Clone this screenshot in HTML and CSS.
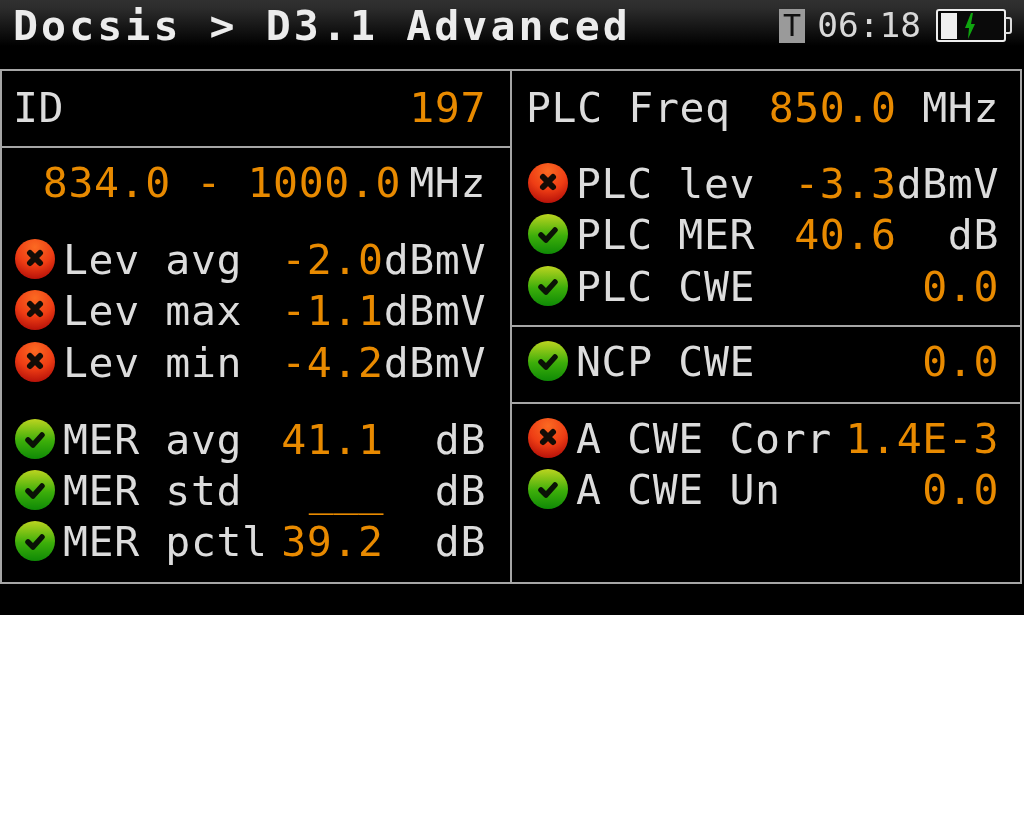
FILE: index.html
```html
<!DOCTYPE html>
<html lang="en">
<head>
<meta charset="utf-8">
<title>Docsis D3.1 Advanced</title>
<link rel="stylesheet" href="styles.css">
</head>
<body>
<svg class="defs" width="0" height="0" aria-hidden="true">
  <defs>
    <radialGradient id="redFill" cx="50%" cy="20%" r="85%">
      <stop offset="0" stop-color="#fb6a22"/>
      <stop offset="0.55" stop-color="#ee3d14"/>
      <stop offset="1" stop-color="#b00c08"/>
    </radialGradient>
    <linearGradient id="greenFill" x1="0" y1="0" x2="0" y2="1">
      <stop offset="0" stop-color="#bcd420"/>
      <stop offset="0.55" stop-color="#3cae0a"/>
      <stop offset="1" stop-color="#0f8a06"/>
    </linearGradient>
    <symbol id="bad" viewBox="0 0 40 40">
      <circle cx="20" cy="20" r="20" fill="url(#redFill)"/>
      <path d="M15 14 L25 24 M25 14 L15 24" stroke="#120c06" stroke-width="6" stroke-linecap="round" fill="none"/>
    </symbol>
    <symbol id="good" viewBox="0 0 40 40">
      <circle cx="20" cy="20" r="20" fill="url(#greenFill)"/>
      <path d="M13 21 L18 26 L27 16" stroke="#0a1206" stroke-width="5.500" stroke-linecap="round" stroke-linejoin="round" fill="none"/>
    </symbol>
  </defs>
</svg>
<main class="screen">
  <header class="topbar">
    <h1 class="title">Docsis &gt; D3.1 Advanced</h1>
    <div class="status">
      <span class="badge">T</span>
      <span class="clock">06:18</span>
      <svg class="battery" viewBox="0 0 76 34" width="76" height="34" aria-hidden="true">
        <rect x="1" y="1" width="68" height="31" rx="2" fill="#0a0a0a" stroke="#eee" stroke-width="2"/>
        <path d="M69 9 h4 a2 2 0 0 1 2 2 v11 a2 2 0 0 1 -2 2 h-4" fill="none" stroke="#ddd" stroke-width="2"/>
        <rect x="5" y="4" width="16" height="26" fill="#f0f0f0"/>
        <path d="M35 4 L29 19 L33 19 L32 30 L39 15 L35 15 L37 4 Z" fill="#0fa50f"/>
      </svg>
    </div>
  </header>
  <div class="panel">
    <section class="col col-left">
      <div class="cell cell-id">
        <div class="row"><span class="label">ID</span><span class="val">197</span></div>
      </div>
      <div class="cell cell-grow">
        <div class="row row-range"><span class="val">834.0 - 1000.0</span><span class="unit-mhz">MHz</span></div>
        <div class="group group-lev">
          <div class="row"><svg class="ico"><use href="#bad"/></svg><span class="label">Lev avg</span><span class="val">-2.0</span><span class="unit">dBmV</span></div>
          <div class="row"><svg class="ico"><use href="#bad"/></svg><span class="label">Lev max</span><span class="val">-1.1</span><span class="unit">dBmV</span></div>
          <div class="row"><svg class="ico"><use href="#bad"/></svg><span class="label">Lev min</span><span class="val">-4.2</span><span class="unit">dBmV</span></div>
        </div>
        <div class="group group-mer">
          <div class="row"><svg class="ico"><use href="#good"/></svg><span class="label">MER avg</span><span class="val">41.1</span><span class="unit">dB</span></div>
          <div class="row"><svg class="ico"><use href="#good"/></svg><span class="label">MER std</span><span class="val val-blank">___</span><span class="unit">dB</span></div>
          <div class="row"><svg class="ico"><use href="#good"/></svg><span class="label">MER pctl</span><span class="val">39.2</span><span class="unit">dB</span></div>
        </div>
      </div>
    </section>
    <section class="col col-right">
      <div class="cell cell-plc">
        <div class="row row-freq"><span class="label">PLC Freq</span><span class="val">850.0</span><span class="unit">MHz</span></div>
        <div class="group group-plc">
          <div class="row"><svg class="ico"><use href="#bad"/></svg><span class="label">PLC lev</span><span class="val">-3.3</span><span class="unit">dBmV</span></div>
          <div class="row"><svg class="ico"><use href="#good"/></svg><span class="label">PLC MER</span><span class="val">40.6</span><span class="unit">dB</span></div>
          <div class="row"><svg class="ico"><use href="#good"/></svg><span class="label">PLC CWE</span><span class="val">0.0</span></div>
        </div>
      </div>
      <div class="cell cell-ncp">
        <div class="row"><svg class="ico"><use href="#good"/></svg><span class="label">NCP CWE</span><span class="val">0.0</span></div>
      </div>
      <div class="cell cell-grow cell-cwe">
        <div class="row"><svg class="ico"><use href="#bad"/></svg><span class="label">A CWE Corr</span><span class="val">1.4E-3</span></div>
        <div class="row"><svg class="ico"><use href="#good"/></svg><span class="label">A CWE Un</span><span class="val">0.0</span></div>
      </div>
    </section>
  </div>
</main>
</body>
</html>
```
FILE: styles.css
```css
* { box-sizing: border-box; margin: 0; padding: 0; }
html, body { background: #fff; }
.defs { position: absolute; }
.screen {
  width: 1024px;
  height: 615px;
  background: #000;
  color: #dcdcdc;
  font-family: "DejaVu Sans Mono", monospace;
  font-size: 41.5px;
  letter-spacing: 0.6px;
  line-height: 51.2px;
  overflow: hidden;
  filter: blur(0.7px);
}
.topbar {
  height: 69px;
  display: flex;
  justify-content: space-between;
  background: linear-gradient(#303030 0, #2c2c2c 8px, #000 46px);
}
.title {
  font-size: 41.5px;
  font-weight: bold;
  letter-spacing: 3.1px;
  line-height: 52px;
  padding-left: 13px;
  color: #ececec;
  white-space: pre;
}
.status { display: flex; align-items: center; height: 52px; padding-right: 12px; }
.badge {
  width: 26px; height: 34px;
  background: #9a9a9a; color: #111;
  font-size: 30px; letter-spacing: 0; line-height: 34px; text-align: center;
  margin-right: 12px;
}
.clock { font-size: 34.500px; letter-spacing: 0; margin-right: 15px; color: #d8d8d8; }
.battery { display: block; }
.panel {
  width: 1022px;
  height: 515px;
  border: 2px solid #a6a6a6;
  display: flex;
}
.col { display: flex; flex-direction: column; width: 510px; }
.col-left { border-right: 2px solid #a6a6a6; }
.col-right { flex: 1; }
.cell { border-bottom: 2px solid #a6a6a6; }
.cell:last-child { border-bottom: 0; }
.cell-grow { flex: 1; }
.row { display: flex; height: 51.2px; padding: 0 24px 0 11px; }
.label { flex: 1; white-space: pre; }
.val { color: #e88a00; white-space: pre; }
.val-blank { letter-spacing: 0; }
.unit { width: 102.400px; text-align: right; }
.ico { width: 40px; height: 40px; margin: 5px 8px 0 2px; flex: none; }
.cell-id { height: 77px; padding-top: 11px; }
.row-range { justify-content: flex-end; margin-top: 9px; }
.unit-mhz { width: 85px; text-align: right; }
.group-lev { margin-top: 26px; }
.group-mer { margin-top: 26px; }
.cell-plc { height: 256px; padding-top: 11px; }
.group-plc { margin-top: 25px; }
.cell-ncp { height: 77px; padding-top: 9px; }
.cell-cwe { padding-top: 9px; }
.col-right .row { padding-left: 14px; padding-right: 21px; }
```
